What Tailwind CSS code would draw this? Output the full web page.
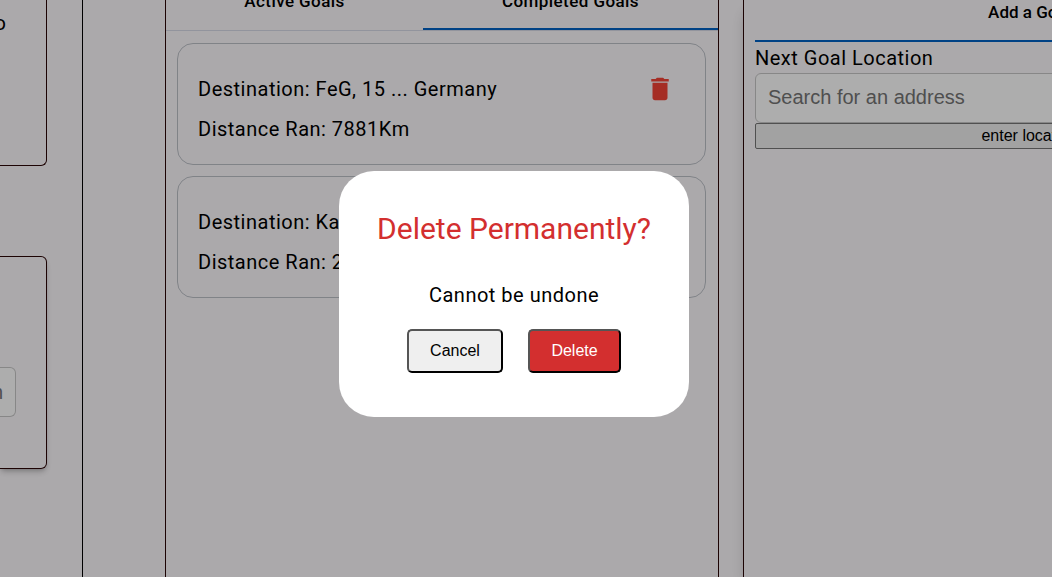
<!DOCTYPE html>
<html lang="en">
<head>
<meta charset="utf-8">
<meta name="viewport" content="width=device-width, initial-scale=1">
<title>Goals</title>
<script src="https://cdn.jsdelivr.net/npm/@tailwindcss/browser@4"></script>
</head>
<body class="bg-[#fdfafd] font-['Roboto',sans-serif] text-black">
<div class="flex h-screen overflow-hidden">
  <!-- Left column -->
  <aside class="flex w-[83px] shrink-0 flex-col border-r border-black pr-[35px]">
    <section class="h-[166px] shrink-0 rounded-br-md border-r border-b border-[#2a0505] pt-2 pr-10 text-xl leading-[30px]">
      <p class="flex justify-end">o</p>
    </section>
    <section class="mt-[90px] h-[213px] shrink-0 rounded-r-md border-y border-r border-[#2a0505] pt-[110px] pr-[30px] shadow-md shadow-black/20">
      <div class="flex h-[50px] items-center justify-end rounded-r-md border-y border-r border-[#c8c8c8] bg-white pr-3 font-['Liberation_Sans',sans-serif] text-xl text-[#757575]">n</div>
    </section>
  </aside>

  <!-- Goals panel -->
  <main class="min-w-0 flex-1 pr-6 pl-[82px]">
    <section class="h-full overflow-hidden border-x border-[#2a0505]">
      <div role="tablist" class="-mt-7 flex h-[59px] border-b border-[#d8dae8] text-[17px] font-medium tracking-wide">
        <button role="tab" aria-selected="false" class="flex-[257] pt-px">Active Goals</button>
        <button role="tab" aria-selected="true" class="flex-[295] border-b-2 border-[#0062c4] pt-[3px]">Completed Goals</button>
      </div>
      <ul class="flex flex-col gap-[11px] pt-3 pr-3 pl-[11px]">
        <li class="flex h-[122px] items-start justify-between rounded-2xl border border-[#bdc1c8] pt-[25px] pr-[30px] pl-5">
          <div class="text-xl leading-10 tracking-wide">
            <p>Destination: FeG, 15 ... Germany</p>
            <p>Distance Ran: 7881Km</p>
          </div>
          <button aria-label="Delete goal" class="mt-[5px] text-[#f44336]">
            <svg class="size-[30px]" viewBox="0 0 24 24" fill="currentColor" aria-hidden="true"><path d="M6 19c0 1.100.9 2 2 2h8c1.100 0 2-.9 2-2V7H6v12zM19 4h-3.500l-1-1h-5l-1 1H5v2h14V4z"/></svg>
          </button>
        </li>
        <li class="h-[122px] rounded-2xl border border-[#bdc1c8] pt-[25px] pl-5">
          <div class="text-xl leading-10 tracking-wide">
            <p>Destination: Ka</p>
            <p>Distance Ran: 2</p>
          </div>
        </li>
      </ul>
    </section>
  </main>

  <!-- New goal panel -->
  <section class="w-[309px] shrink-0 overflow-hidden border-l border-[#2a0505] pl-[11px] shadow-lg shadow-black/20">
    <div class="w-[549px]">
      <div role="tablist" class="-mt-[18px] flex h-[60px] border-b-2 border-[#0062c4] text-[17px] font-medium">
        <button role="tab" aria-selected="true" class="flex-1 pt-[3px]">Add a Goal</button>
      </div>
      <label for="address" class="block h-[31px] text-xl leading-8 tracking-wide">Next Goal Location</label>
      <input id="address" type="text" placeholder="Search for an address" class="block h-[50px] w-full rounded-md border border-[#c8c8c8] bg-white px-3 pb-0.5 font-['Liberation_Sans',sans-serif] text-xl placeholder:text-[#757575]">
      <button class="block h-[26px] w-full rounded-xs border border-[#767676] bg-[#efefef] font-['Liberation_Sans',sans-serif] text-base leading-6">enter location</button>
    </div>
  </section>
</div>

<!-- Confirmation dialog over the dimmed page -->
<div class="fixed inset-0 flex items-center justify-center bg-black/32 pt-[11px] pr-6">
  <div role="dialog" aria-modal="true" aria-labelledby="confirm-title" class="flex w-[350px] flex-col items-center rounded-[35px] bg-white pt-9 pb-11">
    <h2 id="confirm-title" class="text-[30px] leading-[44px] text-[#d32f2f]">Delete Permanently?</h2>
    <p class="mt-7 text-xl leading-8 tracking-wide">Cannot be undone</p>
    <div class="mt-[18px] flex gap-[25px] font-['Liberation_Sans',sans-serif] text-base">
      <button class="h-11 w-24 rounded-[5px] border-2 border-black border-t-[#555] border-l-[#555] bg-[#efefef]">Cancel</button>
      <button class="h-11 w-[93px] rounded-[5px] border-2 border-black border-t-[#555] border-l-[#555] bg-[#d32f2f] text-white">Delete</button>
    </div>
  </div>
</div>
</body>
</html>
